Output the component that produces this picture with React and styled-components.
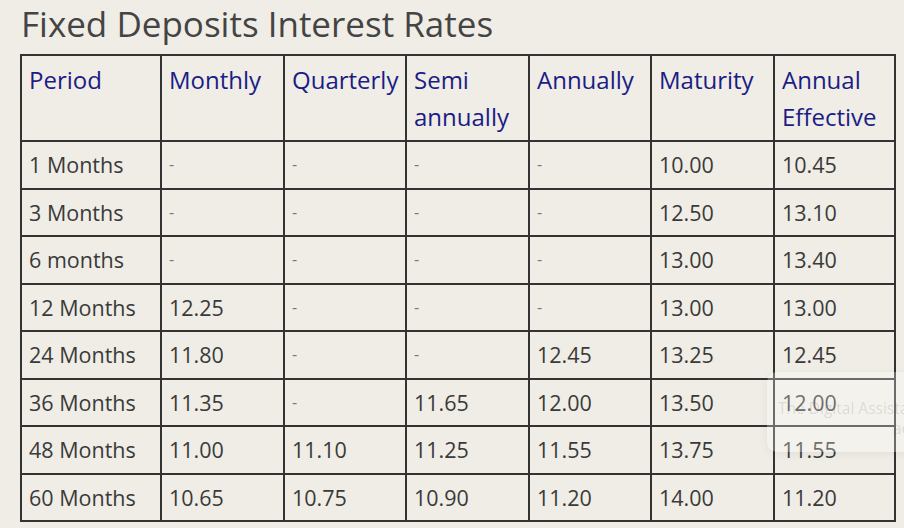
import React from 'react';
import styled, { createGlobalStyle } from 'styled-components';

const GlobalStyle = createGlobalStyle`
  html, body {
    margin: 0;
    background: #efede6;
    font-family: "Open Sans", "Noto Sans", sans-serif;
  }
`;

const Page = styled.div`
  position: relative;
  width: 904px;
  height: 528px;
  overflow: hidden;
  padding: 0 0 0 20px;
  box-sizing: border-box;
`;

const Title = styled.h2`
  margin: 0;
  padding: 0 0 0 1px;
  height: 54px;
  font-size: 35px;
  font-weight: 400;
  color: #444;
  line-height: 48px;
`;

const Table = styled.table`
  border-collapse: collapse;
  width: 874px;
  table-layout: fixed;
  color: #3a3a3a;
  font-size: 21.5px;
`;

const Head = styled.th`
  border: 2px solid #333;
  padding: 5px 7px;
  text-align: left;
  vertical-align: top;
  font-weight: 400;
  font-size: 24px;
  color: #1c1c85;
  line-height: 37px;
`;

const Cell = styled.td`
  border: 2px solid #333;
  padding: 4px 7px;
  height: 37.5px;
  line-height: 37.5px;
  color: ${p => (p.dash ? '#777' : '#3a3a3a')};
  font-size: ${p => (p.dash ? '16px' : '21.5px')};
`;

const Toast = styled.div`
  position: absolute;
  left: 767px;
  top: 372px;
  width: 170px;
  height: 80px;
  border-radius: 10px;
  background: rgba(255, 255, 255, 0.28);
  box-shadow: 0 2px 10px rgba(0, 0, 0, 0.06);
  padding: 26px 0 0 11px;
  box-sizing: border-box;
  font-size: 15.5px;
  line-height: 20px;
  color: rgba(60, 60, 60, 0.14);
  white-space: nowrap;
`;

const ToastLine = styled.div`
  padding-left: ${p => p.indent || 0}px;
`;

const columns = [140, 123, 122, 123, 122, 123, 121];

const headers = ['Period', 'Monthly', 'Quarterly', 'Semi annually', 'Annually', 'Maturity', 'Annual Effective'];

const rows = [
  ['1 Months', '-', '-', '-', '-', '10.00', '10.45'],
  ['3 Months', '-', '-', '-', '-', '12.50', '13.10'],
  ['6 months', '-', '-', '-', '-', '13.00', '13.40'],
  ['12 Months', '12.25', '-', '-', '-', '13.00', '13.00'],
  ['24 Months', '11.80', '-', '-', '12.45', '13.25', '12.45'],
  ['36 Months', '11.35', '-', '11.65', '12.00', '13.50', '12.00'],
  ['48 Months', '11.00', '11.10', '11.25', '11.55', '13.75', '11.55'],
  ['60 Months', '10.65', '10.75', '10.90', '11.20', '14.00', '11.20'],
];

const App = () => (
  <Page>
    <GlobalStyle />
    <Title>Fixed Deposits Interest Rates</Title>
    <Table>
      <colgroup>
        {columns.map((w, i) => <col key={i} style={{ width: w }} />)}
      </colgroup>
      <thead>
        <tr>
          {headers.map(h => <Head key={h}>{h}</Head>)}
        </tr>
      </thead>
      <tbody>
        {rows.map(r => (
          <tr key={r[0]}>
            {r.map((v, i) => <Cell key={i} dash={v === '-'}>{v}</Cell>)}
          </tr>
        ))}
      </tbody>
    </Table>
    <Toast>
      <ToastLine>The Digital Assistant</ToastLine>
      <ToastLine indent={115}>ac</ToastLine>
    </Toast>
  </Page>
);

export default App;
